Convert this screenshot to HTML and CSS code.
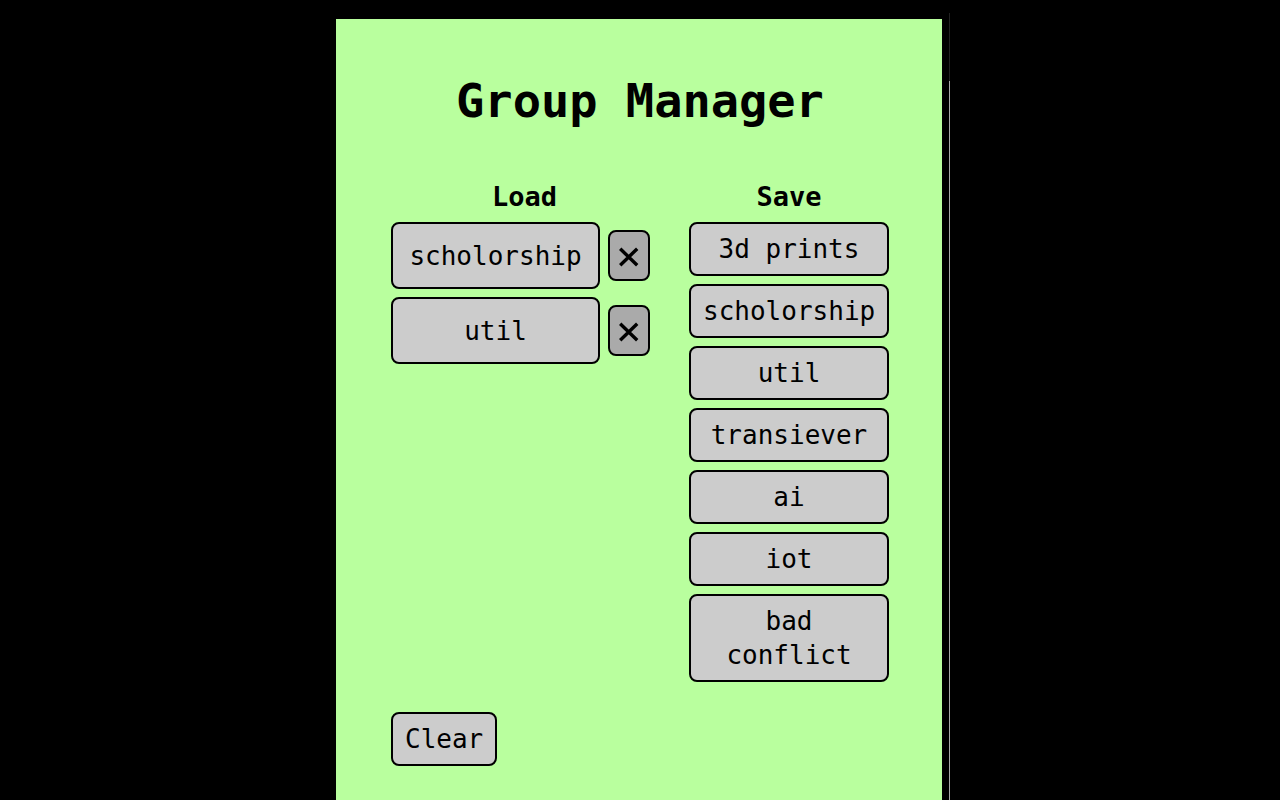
FILE: index.html
```html
<!DOCTYPE html>
<html lang="en">
<head>
<meta charset="utf-8">
<title>Group Manager</title>
<link rel="stylesheet" href="styles.css">
</head>
<body>
<main class="popup">
  <h1 class="title">Group Manager</h1>
  <div class="columns">
    <section class="column load">
      <h2 class="heading">Load</h2>
      <div class="row">
        <button class="button group">scholorship</button>
        <button class="button remove" aria-label="Delete scholorship"><svg class="cross" viewBox="0 0 20 20" aria-hidden="true"><path d="M1.2 1.8 18.2 18.2M18.2 1.8 1.2 18.2"/></svg></button>
      </div>
      <div class="row">
        <button class="button group">util</button>
        <button class="button remove" aria-label="Delete util"><svg class="cross" viewBox="0 0 20 20" aria-hidden="true"><path d="M1.2 1.8 18.2 18.2M18.2 1.8 1.2 18.2"/></svg></button>
      </div>
    </section>
    <section class="column save">
      <h2 class="heading">Save</h2>
      <button class="button">3d prints</button>
      <button class="button">scholorship</button>
      <button class="button">util</button>
      <button class="button">transiever</button>
      <button class="button">ai</button>
      <button class="button">iot</button>
      <button class="button">bad conflict</button>
    </section>
  </div>
  <button class="button clear">Clear</button>
</main>
<div class="edge"></div>
</body>
</html>
```
FILE: styles.css
```css
* {
  box-sizing: border-box;
}

body {
  margin: 0;
  min-height: 100vh;
  display: flex;
  justify-content: center;
  gap: 7px;
  padding-left: 6px;
  background: #000;
  color: #000;
  font-family: "DejaVu Sans Mono", "Liberation Mono", monospace;
  font-size: 26px;
  line-height: 34px;
}

.popup {
  margin-top: 19px;
  padding: 50px 53px 34px 55px;
  background: #b9ff9e;
}

.title {
  margin: 0 0 46px;
  font-size: 47px;
  line-height: 64px;
  text-align: center;
}

.columns {
  display: flex;
  align-items: flex-start;
  gap: 31px;
  margin-bottom: 30px;
}

.column {
  display: flex;
  flex-direction: column;
  gap: 8px;
}

.load {
  width: 267px;
  padding-right: 8px;
}

.save {
  width: 200px;
}

.heading {
  margin: 0;
  font-size: 27px;
  line-height: 35px;
  text-align: center;
}

.load .heading {
  margin-right: -8px;
}

.row {
  display: flex;
  gap: 8px;
}

.button {
  padding: 8px 12px;
  border: 2px solid #000;
  border-radius: 8px;
  background: #ccc;
  color: inherit;
  font: inherit;
}

.group {
  flex: 1;
}

.remove {
  width: 42px;
  height: 51px;
  margin: 8px 0;
  padding: 2px 0 0;
  background: #aaa;
}

.cross {
  display: block;
  width: 20px;
  height: 20px;
  margin: 0 auto;
  fill: none;
  stroke: #000;
  stroke-width: 3.4;
}

.edge {
  width: 1px;
  margin-top: 13px;
  background: linear-gradient(#222 68px, #aaa 68px);
}
```
